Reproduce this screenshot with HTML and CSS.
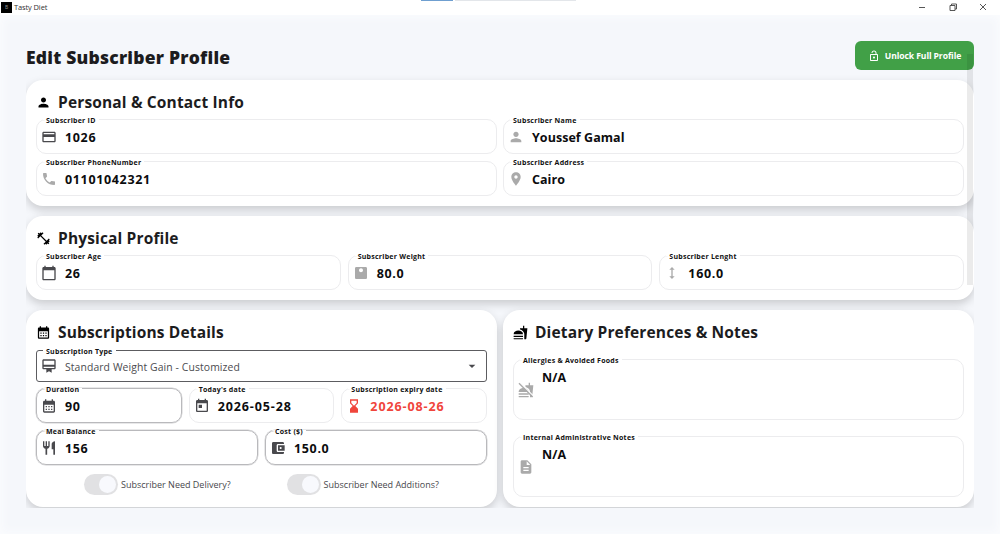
FILE: index.html
```html
<!DOCTYPE html>
<html lang="en">
<head>
    <meta charset="UTF-8">
    <meta name="viewport" content="width=device-width, initial-scale=1.0">
    <title>Tasty Diet</title>
    <link rel="stylesheet" href="styles.css">
</head>
<body>
    <div class="titlebar">
        <span class="app-icon">B</span>
        <span class="app-name">Tasty Diet</span>
        <div class="edge-tabs"><i class="edge-active"></i><i class="edge-rest"></i></div>
        <div class="window-buttons">
            <svg viewBox="0 0 10 10"><path d="M2 5.5h6"/></svg>
            <svg viewBox="0 0 10 10"><path d="M2 3.5h5v5H2zM3.5 3.5v-1.5h5v5H7"/></svg>
            <svg viewBox="0 0 10 10"><path d="M2 2l6 6M8 2l-6 6"/></svg>
        </div>
    </div>

    <main class="page">
        <header class="page-header">
            <h1>Edit Subscriber Profile</h1>
            <button class="unlock-btn">
                <svg viewBox="0 0 24 24"><path d="M12 17c1.1 0 2-.9 2-2s-.9-2-2-2-2 .9-2 2 .9 2 2 2zm6-9h-1V6c0-2.76-2.24-5-5-5S7 3.24 7 6h1.9c0-1.71 1.39-3.1 3.1-3.1 1.71 0 3.1 1.39 3.1 3.1v2H6c-1.1 0-2 .9-2 2v10c0 1.1.9 2 2 2h12c1.1 0 2-.9 2-2V10c0-1.1-.9-2-2-2zm0 12H6V10h12v10z"/></svg>
                <span>Unlock Full Profile</span>
            </button>
        </header>

        <div class="cards">
            <section class="card">
                <h2>
                    <svg viewBox="0 0 24 24"><path d="M12 12c2.21 0 4-1.79 4-4s-1.79-4-4-4-4 1.79-4 4 1.79 4 4 4zm0 2c-2.67 0-8 1.34-8 4v2h16v-2c0-2.66-5.33-4-8-4z"/></svg>
                    <span>Personal &amp; Contact Info</span>
                </h2>
                <div class="fields two contact">
                    <fieldset class="field">
                        <legend>Subscriber ID</legend>
                        <svg viewBox="0 0 24 24"><path d="M20 4H4c-1.11 0-1.99.89-1.99 2L2 18c0 1.11.89 2 2 2h16c1.11 0 2-.89 2-2V6c0-1.11-.89-2-2-2zm0 14H4v-6h16v6zm0-10H4V6h16v2z"/></svg>
                        <span class="value">1026</span>
                    </fieldset>
                    <fieldset class="field muted">
                        <legend>Subscriber Name</legend>
                        <svg viewBox="0 0 24 24"><path d="M12 12c2.21 0 4-1.79 4-4s-1.79-4-4-4-4 1.79-4 4 1.79 4 4 4zm0 2c-2.67 0-8 1.34-8 4v2h16v-2c0-2.66-5.33-4-8-4z"/></svg>
                        <span class="value words">Youssef Gamal</span>
                    </fieldset>
                    <fieldset class="field muted">
                        <legend>Subscriber PhoneNumber</legend>
                        <svg viewBox="0 0 24 24"><path d="M6.62 10.79c1.44 2.83 3.76 5.14 6.59 6.59l2.2-2.2c.27-.27.67-.36 1.02-.24 1.12.37 2.33.57 3.57.57.55 0 1 .45 1 1V20c0 .55-.45 1-1 1-9.39 0-17-7.61-17-17 0-.55.45-1 1-1h3.5c.55 0 1 .45 1 1 0 1.25.2 2.45.57 3.57.11.35.03.74-.25 1.02l-2.2 2.2z"/></svg>
                        <span class="value">01101042321</span>
                    </fieldset>
                    <fieldset class="field muted">
                        <legend>Subscriber Address</legend>
                        <svg viewBox="0 0 24 24"><path d="M12 2C8.13 2 5 5.13 5 9c0 5.25 7 13 7 13s7-7.75 7-13c0-3.87-3.13-7-7-7zm0 9.5c-1.38 0-2.5-1.12-2.5-2.5s1.12-2.5 2.5-2.5 2.5 1.12 2.5 2.5-1.12 2.5-2.5 2.5z"/></svg>
                        <span class="value words">Cairo</span>
                    </fieldset>
                </div>
            </section>

            <section class="card">
                <h2>
                    <svg viewBox="0 0 24 24"><path d="M20.57 14.86L22 13.43 20.57 12 17 15.57 8.43 7 12 3.43 10.57 2 9.14 3.43 7.71 2 5.57 4.14 4.14 2.71 2.71 4.14l1.43 1.43L2 7.71l1.43 1.43L2 10.57 3.43 12 7 8.43 15.57 17 12 20.57 13.43 22l1.43-1.43L16.29 22l2.14-2.14 1.43 1.43 1.43-1.43-1.43-1.43L22 16.29z"/></svg>
                    <span>Physical Profile</span>
                </h2>
                <div class="fields three">
                    <fieldset class="field">
                        <legend>Subscriber Age</legend>
                        <svg viewBox="0 0 24 24"><path d="M20 3h-1V1h-2v2H7V1H5v2H4c-1.1 0-2 .9-2 2v16c0 1.1.9 2 2 2h16c1.1 0 2-.9 2-2V5c0-1.1-.9-2-2-2zm0 18H4V8h16v13z"/></svg>
                        <span class="value">26</span>
                    </fieldset>
                    <fieldset class="field muted">
                        <legend>Subscriber Weight</legend>
                        <svg viewBox="0 0 24 24"><path d="M19 3H5c-1.1 0-2 .9-2 2v14c0 1.1.9 2 2 2h14c1.1 0 2-.9 2-2V5c0-1.1-.9-2-2-2zm-7 8c-1.66 0-3-1.34-3-3s1.34-3 3-3 3 1.34 3 3-1.34 3-3 3z"/></svg>
                        <span class="value">80.0</span>
                    </fieldset>
                    <fieldset class="field muted">
                        <legend>Subscriber Lenght</legend>
                        <svg viewBox="0 0 24 24"><path d="M13 6.99h3L12 3 8 6.99h3v10.02H8L12 21l4-3.99h-3z"/></svg>
                        <span class="value">160.0</span>
                    </fieldset>
                </div>
            </section>

            <div class="card-row">
                <section class="card">
                    <h2>
                        <svg viewBox="0 0 24 24"><path d="M19 4h-1V2h-2v2H8V2H6v2H5c-1.11 0-1.99.9-1.99 2L3 20c0 1.1.89 2 2 2h14c1.1 0 2-.9 2-2V6c0-1.1-.9-2-2-2zm0 16H5V10h14v10zM9 14H7v-2h2v2zm4 0h-2v-2h2v2zm4 0h-2v-2h2v2zm-8 4H7v-2h2v2zm4 0h-2v-2h2v2zm4 0h-2v-2h2v2z"/></svg>
                        <span>Subscriptions Details</span>
                    </h2>
                    <div class="stack">
                        <fieldset class="field select">
                            <legend>Subscription Type</legend>
                            <svg viewBox="0 0 24 24"><path d="M20 2H4c-1.11 0-2 .89-2 2v11c0 1.11.89 2 2 2h4v5l4-2 4 2v-5h4c1.11 0 2-.89 2-2V4c0-1.11-.89-2-2-2zm0 13H4v-2h16v2zm0-5H4V4h16v6z"/></svg>
                            <span class="value">Standard Weight Gain - Customized</span>
                            <svg class="arrow" viewBox="0 0 24 24"><path d="M7 10l5 5 5-5z"/></svg>
                        </fieldset>
                        <div class="fields three">
                            <fieldset class="field active">
                                <legend>Duration</legend>
                                <svg viewBox="0 0 24 24"><path d="M19 4h-1V2h-2v2H8V2H6v2H5c-1.11 0-1.99.9-1.99 2L3 20c0 1.1.89 2 2 2h14c1.1 0 2-.9 2-2V6c0-1.1-.9-2-2-2zm0 16H5V10h14v10zM9 14H7v-2h2v2zm4 0h-2v-2h2v2zm4 0h-2v-2h2v2zm-8 4H7v-2h2v2zm4 0h-2v-2h2v2zm4 0h-2v-2h2v2z"/></svg>
                                <span class="value">90</span>
                            </fieldset>
                            <fieldset class="field">
                                <legend>Today's date</legend>
                                <svg viewBox="0 0 24 24"><path d="M19 3h-1V1h-2v2H8V1H6v2H5c-1.11 0-1.99.9-1.99 2L3 19c0 1.1.89 2 2 2h14c1.1 0 2-.9 2-2V5c0-1.1-.9-2-2-2zm0 16H5V8h14v11zM7 10h5v5H7z"/></svg>
                                <span class="value date">2026-05-28</span>
                            </fieldset>
                            <fieldset class="field expiry">
                                <legend>Subscription expiry date</legend>
                                <svg viewBox="0 0 24 24"><path d="M18 22l-.01-6L14 12l3.99-4.01L18 2H6v6l4 4-4 3.99V22h12zM8 7.5V4h8v3.5l-4 4-4-4z"/></svg>
                                <span class="value date">2026-08-26</span>
                            </fieldset>
                        </div>
                        <div class="fields two">
                            <fieldset class="field active">
                                <legend>Meal Balance</legend>
                                <svg viewBox="0 0 24 24"><path d="M11 9H9V2H7v7H5V2H3v7c0 2.12 1.66 3.84 3.75 3.97V22h2.5v-9.03C11.34 12.84 13 11.12 13 9V2h-2v7zm5-3v8h2.5v8H21V2c-2.76 0-5 2.24-5 4z"/></svg>
                                <span class="value">156</span>
                            </fieldset>
                            <fieldset class="field active">
                                <legend>Cost ($)</legend>
                                <svg viewBox="0 0 24 24"><path d="M21 18v1c0 1.1-.9 2-2 2H5c-1.11 0-2-.9-2-2V5c0-1.1.89-2 2-2h14c1.1 0 2 .9 2 2v1h-9c-1.11 0-2 .9-2 2v8c0 1.1.89 2 2 2h9zm-9-2h10V8H12v8zm4-2.5c-.83 0-1.5-.67-1.5-1.5s.67-1.5 1.5-1.5 1.5.67 1.5 1.5-.67 1.5-1.5 1.5z"/></svg>
                                <span class="value">150.0</span>
                            </fieldset>
                        </div>
                    </div>
                    <div class="switches">
                        <label class="switch"><span class="track"></span><span class="switch-text">Subscriber Need Delivery?</span></label>
                        <label class="switch"><span class="track"></span><span class="switch-text">Subscriber Need Additions?</span></label>
                    </div>
                </section>

                <section class="card">
                    <h2>
                        <svg viewBox="0 0 24 24"><path d="M18.06 22.99h1.66c.84 0 1.53-.64 1.63-1.46L23 5.05h-5V1h-1.97v4.05h-4.97l.3 2.34c1.71.47 3.31 1.32 4.27 2.26 1.44 1.42 2.43 2.89 2.43 5.29v8.05zM1 21.99V21h15.03v.99c0 .55-.45 1-1.01 1H2.01c-.56 0-1.01-.45-1.01-1zm15.03-7c0-8-15.03-8-15.03 0h15.03zM1.02 17h15v2h-15z"/></svg>
                        <span>Dietary Preferences &amp; Notes</span>
                    </h2>
                    <div class="notes">
                        <fieldset class="field muted area">
                            <legend>Allergies &amp; Avoided Foods</legend>
                            <svg viewBox="0 0 24 24"><path d="M18.06 22.99h1.66c.84 0 1.53-.64 1.63-1.46L23 5.05h-5V1h-1.97v4.05h-4.97l.3 2.34c1.71.47 3.31 1.32 4.27 2.26 1.44 1.42 2.43 2.89 2.43 5.29v8.05zM1 21.99V21h15.03v.99c0 .55-.45 1-1.01 1H2.01c-.56 0-1.01-.45-1.01-1zm15.03-7c0-8-15.03-8-15.03 0h15.03zM1.02 17h15v2h-15z"/><path class="slash-gap" d="M2.5 0.5l22 22"/><path class="slash" d="M1.5 2l20.5 20.5"/></svg>
                            <span class="value words">N/A</span>
                        </fieldset>
                        <fieldset class="field muted area">
                            <legend>Internal Administrative Notes</legend>
                            <svg viewBox="0 0 24 24"><path d="M14 2H6c-1.1 0-1.99.9-1.99 2L4 20c0 1.1.89 2 1.99 2H18c1.1 0 2-.9 2-2V8l-6-6zm2 16H8v-2h8v2zm0-4H8v-2h8v2zm-3-5V3.5L18.5 9H13z"/></svg>
                            <span class="value words">N/A</span>
                        </fieldset>
                    </div>
                </section>
            </div>
        </div>
        <div class="scroll-thumb"></div>
    </main>
</body>
</html>
```
FILE: styles.css
```css
* {
    box-sizing: border-box;
}

body {
    margin: 0;
    height: 534px;
    overflow: hidden;
    display: flex;
    flex-direction: column;
    background: #fff;
    color: #1c1c1e;
    font-family: 'Open Sans', 'Noto Sans', sans-serif;
}

svg {
    display: block;
    flex: none;
    fill: currentColor;
}

/* window title bar */
.titlebar {
    position: relative;
    height: 15px;
    padding: 0 12px 1px 1px;
    display: flex;
    align-items: center;
    gap: 2px;
}

.app-icon {
    width: 11px;
    height: 11px;
    background: #000;
    color: #999;
    font-size: 5px;
    line-height: 11px;
    text-align: center;
}

.app-name {
    font-size: 7.5px;
    line-height: 14px;
    letter-spacing: -0.12px;
    color: #333;
}

.edge-tabs {
    position: absolute;
    top: 0;
    left: 421px;
    width: 155px;
    height: 1px;
    display: flex;
    gap: 2px;
}

.edge-active {
    width: 32px;
    background: #6f9fd0;
}

.edge-rest {
    flex: 1;
    background: #e3e6ea;
}

.window-buttons {
    margin-left: auto;
    display: flex;
    gap: 20.5px;
}

.window-buttons svg {
    width: 10px;
    height: 10px;
    fill: none;
    stroke: #444;
    stroke-width: 0.9;
}

/* page */
.page {
    position: relative;
    flex: 1;
    padding: 26px 26px 0;
    background: #f5f7fb;
    box-shadow: inset 0 0 8px 2px #fbfcfe;
}

.page-header {
    display: flex;
    justify-content: space-between;
    align-items: center;
    height: 29px;
}

h1 {
    margin: 2px 0 0;
    font-size: 17.5px;
    line-height: 24px;
    font-weight: 800;
    letter-spacing: 0.22px;
}

.unlock-btn {
    width: 119px;
    height: 29px;
    padding: 0;
    border: none;
    border-radius: 6px;
    background: #41a047;
    color: #fff;
    display: flex;
    align-items: center;
    justify-content: center;
    gap: 5px;
    font-family: inherit;
    font-size: 8.6px;
    font-weight: 700;
    letter-spacing: -0.1px;
    white-space: nowrap;
}

.unlock-btn svg {
    width: 12px;
    height: 12px;
}

.cards {
    height: 438px;
    padding-top: 10px;
    display: flex;
    flex-direction: column;
    gap: 10px;
    overflow: hidden;
}

.card {
    background: #fff;
    border-radius: 17px;
    padding: 12px 10px 10px;
    box-shadow: 0 4px 10px rgba(0, 0, 0, 0.18);
}

.card-row {
    display: grid;
    grid-template-columns: 471px 471px;
    gap: 6px;
    height: 197px;
}

h2 {
    margin: 0 0 7px;
    height: 20px;
    display: flex;
    align-items: center;
    gap: 7px;
    font-size: 15.5px;
    line-height: 20px;
    font-weight: 700;
    letter-spacing: 0.15px;
    white-space: nowrap;
}

h2 svg {
    width: 15px;
    height: 15px;
    color: #000;
}

.fields {
    display: grid;
    gap: 7px;
}

.two {
    grid-template-columns: 1fr 1fr;
}

.three {
    grid-template-columns: 1fr 1fr 1fr;
}

.contact {
    column-gap: 6px;
}

/* outlined field, the legend cuts the border */
.field {
    min-width: 0;
    height: 35px;
    margin: 0;
    padding: 0 4px;
    border: 1px solid #ececee;
    border-radius: 10px;
    display: flex;
    align-items: center;
    gap: 8px;
    color: #49494d;
}

.field legend {
    height: 1px;
    margin-left: 2px;
    padding: 0 3px;
    font-size: 7px;
    line-height: 3px;
    font-weight: 700;
    letter-spacing: 0.25px;
    white-space: nowrap;
    color: #111;
}

.field svg {
    width: 16px;
    height: 16px;
}

.value {
    padding-top: 2px;
    font-size: 12.5px;
    line-height: 18px;
    font-weight: 700;
    letter-spacing: 0.65px;
    white-space: nowrap;
    color: #0c0c0e;
}

.words {
    letter-spacing: 0.05px;
}

.date {
    letter-spacing: 0.9px;
}

.muted {
    color: #aaa;
}

.active {
    border: 1.5px solid #b9b9bc;
    box-shadow: 0 0 0 0.5px #d2d2d4;
}

.expiry,
.expiry .value {
    color: #f0453c;
}

.select {
    height: 32px;
    border-color: #5c5c60;
    border-radius: 3px;
}

.select .value {
    padding-top: 1px;
    font-size: 10.4px;
    font-weight: 400;
    letter-spacing: 0.1px;
    color: #4b4b4f;
}

.select .arrow {
    margin-left: auto;
    margin-right: 2px;
}

.stack {
    display: grid;
    gap: 7px;
    margin-top: 8px;
}

.stack .select {
    margin-bottom: -1px;
}

.switches {
    display: flex;
    justify-content: center;
    gap: 56px;
    margin-top: 9px;
}

.switch {
    display: flex;
    align-items: center;
    gap: 3px;
}

.track {
    width: 34px;
    height: 21px;
    padding: 2px;
    border-radius: 11px;
    background: #e1e1e3;
    display: flex;
    justify-content: flex-end;
}

.track::after {
    content: '';
    width: 17px;
    height: 17px;
    border-radius: 50%;
    background: #f8f9fd;
}

.switch-text {
    font-size: 9px;
    color: #48484c;
    white-space: nowrap;
}

.notes {
    display: grid;
    gap: 16px;
    margin-top: 17px;
}

.area {
    height: 61px;
}

.area .value {
    align-self: flex-start;
    margin-top: 7px;
}

.slash-gap,
.slash {
    fill: none;
    stroke: #fff;
    stroke-width: 2;
}

.slash {
    stroke: #aaa;
}

.scroll-thumb {
    position: absolute;
    top: 39px;
    right: 27px;
    width: 6px;
    height: 231px;
    background: rgba(0, 0, 0, 0.08);
}
```
